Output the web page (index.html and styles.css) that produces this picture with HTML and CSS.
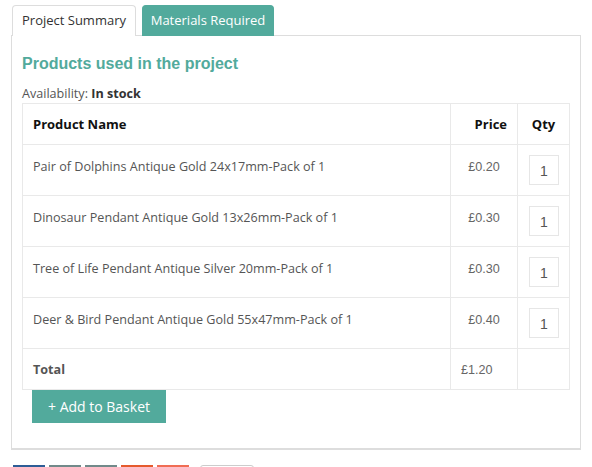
FILE: index.html
```html
<!DOCTYPE html>
<html>
<head>
<meta charset="utf-8">
<link rel="stylesheet" href="styles.css">
</head>
<body>
<div class="wrap">
  <div class="tabs">
    <div class="tab">Project Summary</div>
    <div class="tab active">Materials Required</div>
  </div>
  <div class="panel">
    <h2 class="title">Products used in the project</h2>
    <div class="avail">Availability: <b>In stock</b></div>
    <table class="products">
      <thead>
        <tr><th class="c-name">Product Name</th><th class="c-price">Price</th><th class="c-qty">Qty</th></tr>
      </thead>
      <tbody>
        <tr><td class="c-name">Pair of Dolphins Antique Gold 24x17mm-Pack of 1</td><td class="c-price">£0.20</td><td class="c-qty"><div class="qty">1</div></td></tr>
        <tr><td class="c-name">Dinosaur Pendant Antique Gold 13x26mm-Pack of 1</td><td class="c-price">£0.30</td><td class="c-qty"><div class="qty">1</div></td></tr>
        <tr><td class="c-name">Tree of Life Pendant Antique Silver 20mm-Pack of 1</td><td class="c-price">£0.30</td><td class="c-qty"><div class="qty">1</div></td></tr>
        <tr><td class="c-name">Deer &amp; Bird Pendant Antique Gold 55x47mm-Pack of 1</td><td class="c-price">£0.40</td><td class="c-qty"><div class="qty">1</div></td></tr>
        <tr class="total"><td class="c-name"><b>Total</b></td><td class="c-total">£1.20</td><td class="c-qty"></td></tr>
      </tbody>
    </table>
    <button class="basket">+ Add to Basket</button>
  </div>
  <div class="social">
    <span class="s s1"></span><span class="s s2"></span><span class="s s3"></span><span class="s s4"></span><span class="s s5"></span><span class="s s6"></span>
  </div>
</div>
</body>
</html>
```
FILE: styles.css
```css
html, body { margin: 0; padding: 0; background: #fff; }
body { font-family: "Open Sans", "Liberation Sans", sans-serif; color: #555; }
.wrap { padding: 5px 11px 0 11px; width: 570px; }
.tabs { display: flex; gap: 6px; padding-left: 1px; height: 30px; }
.tab {
  box-sizing: border-box; height: 31px; padding: 0; line-height: 29px; white-space: nowrap;
  font-size: 13px; color: #333; border: 1px solid #ddd; border-bottom: none;
  border-radius: 4px 4px 0 0; background: #fff; width: 124px; text-align: center;
}
.tab.active { background: #52aa9c; border-color: #52aa9c; color: #fff; width: 132px; }
.panel {
  border: 1px solid #ddd; border-bottom: 2px solid #ddd;
  padding: 18px 10px 25px 10px; box-sizing: border-box; width: 570px;
}
.title {
  margin: 0; font-family: "Liberation Sans", Arial, sans-serif; font-weight: bold;
  font-size: 16px; line-height: 20px; color: #52aa9c; height: 24px;
}
.avail { font-size: 12.6px; line-height: 16px; color: #555; height: 16px; margin-top: 8px; }
.avail b { color: #333; }
.products { border-collapse: collapse; width: 548px; margin-top: 1px; }
.products th, .products td {
  border: 1px solid #e9e9e9; padding: 12px 10px 10px 10px; vertical-align: top;
  line-height: 20px; font-size: 12.6px; text-align: left;
}
.products th { font-size: 13px; font-weight: bold; color: #111; padding: 10px; }
.products th.c-price { text-align: right; width: 46px; }
.products th.c-qty { text-align: center; width: 30px; }
.products td.c-price { text-align: center; font-family: "Liberation Sans", Arial, sans-serif; color: #666; }
.products td.c-total { font-family: "Liberation Sans", Arial, sans-serif; color: #666; }
.products td.c-qty { padding: 10px 10px; }
.products .total td { padding: 11px 10px 9px 10px; }
.total b { color: #555; }
.qty {
  box-sizing: border-box; width: 30px; height: 30px; border: 1px solid #e6e6e6;
  font-family: "Liberation Sans", Arial, sans-serif; font-size: 14px; color: #555;
  text-align: center; line-height: 30px; margin-left: 1px;
}
.basket {
  display: block; margin: 0 0 0 10px; border: none; background: #52aa9c; color: #fff;
  font-family: "Open Sans", "Liberation Sans", sans-serif; font-size: 14px;
  height: 33px; width: 134px; padding: 0; cursor: pointer;
}
.social { display: flex; gap: 4px; padding-left: 2px; margin-top: 15px; }
.s { display: block; width: 32px; height: 20px; }
.s1 { background: #2d5d96; }
.s2 { background: #718a8a; }
.s3 { background: #718a8a; }
.s4 { background: #e55a2d; }
.s5 { background: #f06d54; }
.s6 { background: #fff; border: 1px solid #ccc; border-radius: 3px; width: 52px; margin-left: 7px; }
```
